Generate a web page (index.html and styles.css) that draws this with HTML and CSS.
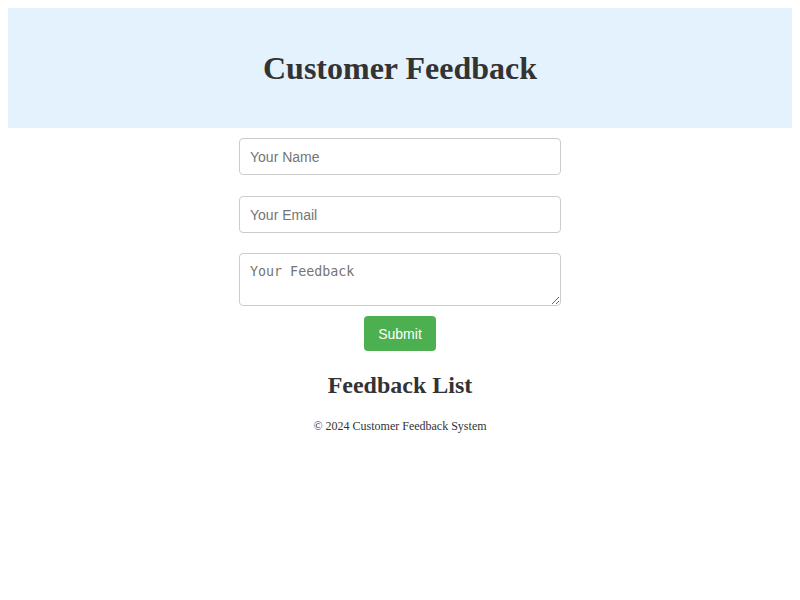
FILE: index.html
```html
<!DOCTYPE html>
<html>
<head>
<meta charset="utf-8">
<link rel="stylesheet" href="styles.css">
</head>
<body>
<header class="site-header">
  <h1 class="title">Customer Feedback</h1>
</header>
<main class="main">
  <form class="feedback-form">
    <input class="field" type="text" placeholder="Your Name">
    <input class="field" type="email" placeholder="Your Email">
    <textarea class="field area" placeholder="Your Feedback"></textarea>
    <button class="submit" type="button">Submit</button>
  </form>
  <h2 class="list-title">Feedback List</h2>
  <div class="list"></div>
</main>
<footer class="footer">© 2024 Customer Feedback System</footer>
</body>
</html>
```

FILE: styles.css
```css
body {
  margin: 8px;
  font-family: "Liberation Serif", serif;
  color: #333;
  background: #fff;
}
.site-header {
  background: #e3f2fd;
  padding: 20px;
  text-align: center;
}
.title {
  margin: 21.5px 0;
  font-size: 32px;
  line-height: 37px;
}
.main {
  display: flex;
  flex-direction: column;
  align-items: center;
}
.feedback-form {
  width: 322px;
  margin-top: 10px;
  display: flex;
  flex-direction: column;
  align-items: center;
}
.field {
  box-sizing: border-box;
  width: 100%;
  height: 37px;
  padding: 10px;
  border: 1px solid #ccc;
  border-radius: 4px;
  font-family: "Liberation Sans", Arial, sans-serif;
  font-size: 14px;
  color: #333;
  margin: 0 0 21px 0;
}
.field::placeholder { color: #757575; }
.area {
  height: 53px;
  margin-bottom: 10px;
  font-family: "DejaVu Sans Mono", monospace;
  font-size: 13.33px;
  resize: vertical;
}
.field:nth-child(2) { margin-bottom: 20px; }
.submit {
  width: 72px;
  height: 35px;
  background: #4caf50;
  color: #fff;
  border: none;
  border-radius: 4px;
  font-family: "Liberation Sans", Arial, sans-serif;
  font-size: 14px;
  padding: 0;
}
.list-title {
  margin: 20px 0;
  font-size: 24px;
  line-height: 28px;
}
.footer {
  text-align: center;
  font-size: 12px;
  line-height: 14px;
}
```
